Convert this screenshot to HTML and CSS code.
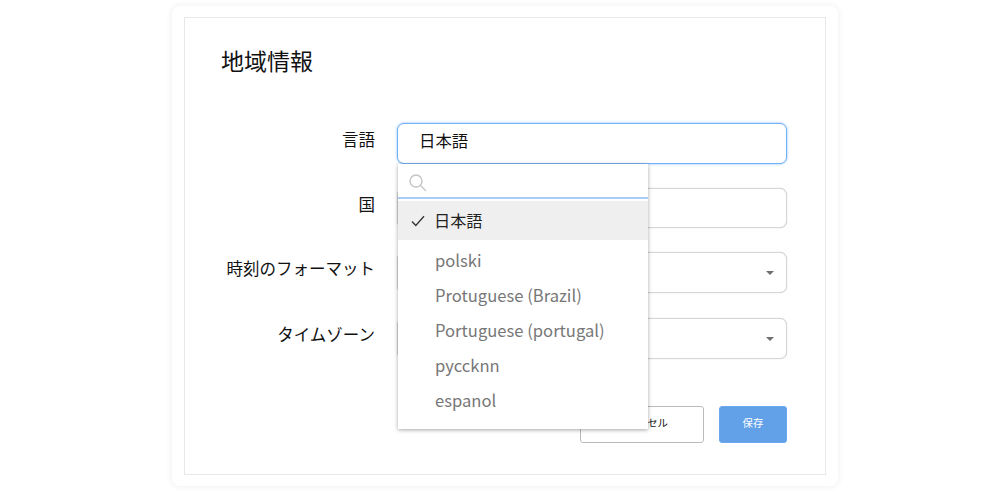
FILE: index.html
```html
<!DOCTYPE html>
<html lang="ja">
<head>
<meta charset="utf-8">
<title>地域情報</title>
<link rel="stylesheet" href="styles.css">
</head>
<body>
<main class="card">
  <section class="panel">
    <h1 class="title">地域情報</h1>
    <form class="form">
      <div class="row row-lang">
        <label class="label">言語</label>
        <div class="field field-focus">
          <span class="value">日本語</span>
          <div class="menu">
            <div class="search">
              <svg class="search-icon" viewBox="0 0 18 18" width="18" height="18"><circle cx="7" cy="7" r="6" fill="none" stroke="#c4c4c4" stroke-width="1.3"/><path d="M11.5 11.5l5.5 5.5" fill="none" stroke="#c4c4c4" stroke-width="1.3"/></svg>
            </div>
            <div class="option option-selected">
              <svg class="check" viewBox="0 0 14 12" width="14" height="12"><path d="M1 6.5l3.8 4L13 1.2" fill="none" stroke="#333" stroke-width="1.3"/></svg>
              <span class="option-text">日本語</span>
            </div>
            <ul class="list">
              <li class="option">polski</li>
              <li class="option">Protuguese (Brazil)</li>
              <li class="option">Portuguese (portugal)</li>
              <li class="option">pyccknn</li>
              <li class="option">espanol</li>
            </ul>
          </div>
        </div>
      </div>
      <div class="row row-country">
        <label class="label">国</label>
        <div class="field"></div>
      </div>
      <div class="row row-time">
        <label class="label">時刻のフォーマット</label>
        <div class="field"><span class="caret"></span></div>
      </div>
      <div class="row row-zone">
        <label class="label">タイムゾーン</label>
        <div class="field"><span class="caret"></span></div>
      </div>
      <div class="actions">
        <button type="button" class="btn btn-cancel">キャンセル</button>
        <button type="button" class="btn btn-save">保存</button>
      </div>
    </form>
  </section>
</main>
</body>
</html>
```
FILE: styles.css
```css
* { box-sizing: border-box; }
html, body { margin: 0; padding: 0; height: 495px; overflow: hidden; background: #fff; }
body {
  font-family: "Noto Sans CJK JP", "Noto Sans", sans-serif;
  color: #111;
  padding: 6px 162px 9px 172px;
}
.card {
  height: 480px;
  background: #fff;
  border-radius: 8px;
  padding: 11px 12px 12px;
  box-shadow: 0 0 6px 1px #f3f0f3;
}
.panel {
  height: 458px;
  border: 1px solid #e8e8e8;
  padding: 26px 38px 0 37px;
}
.title {
  margin: 0 0 0 -1px;
  font-size: 23px;
  font-weight: 400;
  line-height: 32px;
  color: #111;
}
.form { margin-top: 47px; }
.row { display: flex; align-items: center; height: 41px; gap: 22px; }
.row-country { margin-top: 24px; height: 40px; }
.row-time { margin-top: 24px; }
.row-zone { margin-top: 25px; }
.label {
  width: 153px;
  text-align: right;
  font-size: 16.5px;
  line-height: 24px;
  color: #111;
  flex: none;
  height: 33px;
}
.field {
  position: relative;
  width: 390px;
  height: 41px;
  border: 1px solid #d6d6d6;
  border-radius: 7px;
  background: #fff;
  box-shadow: 0 0 1px #c0c0c0;
  display: flex;
  align-items: center;
  padding: 0 0 7px 21px;
}
.row-country .field { height: 40px; }
.field-focus {
  border-color: #72b0f7;
  box-shadow: 0 0 3px #8fc0f9;
}
.value { font-size: 16.4px; color: #111; }
.caret {
  position: absolute;
  right: 12px;
  top: 18px;
  width: 0;
  height: 0;
  border-left: 4px solid transparent;
  border-right: 4px solid transparent;
  border-top: 4px solid #6f6f6f;
}
.menu {
  position: absolute;
  z-index: 2;
  left: 0;
  top: 40px;
  width: 250px;
  height: 265px;
  background: #fff;
  box-shadow: 0 1px 4px rgba(0, 0, 0, .35);
}
.search {
  height: 35px;
  border-bottom: 2px solid #a8cdf8;
  padding: 10px 0 0 11px;
  display: flex;
  align-items: flex-start;
}
.search-icon { display: block; }
.option {
  font-size: 16.6px;
  line-height: 34px;
  height: 35px;
  color: #777;
  padding-left: 37px;
}
.option-selected {
  margin-top: 2px;
  height: 39px;
  line-height: 36px;
  background: #efefef;
  color: #222;
  padding-left: 13px;
  display: flex;
  align-items: center;
  gap: 9px;
}
.option-text { font-size: 16.2px; padding-bottom: 2px; }
.list { list-style: none; margin: 0; padding: 3px 0 0; }
.actions {
  display: flex;
  justify-content: flex-end;
  gap: 15px;
  margin-top: 47px;
}
.btn {
  height: 37px;
  font: inherit;
  font-size: 10.4px;
  border-radius: 3px;
  padding: 0 0 4px;
}
.btn-cancel { width: 124px; background: #fff; border: 1px solid #bbb; color: #111; }
.btn-save { width: 68px; background: #62a1e8; border: 1px solid #6aa8ee; color: #fff; }
```
